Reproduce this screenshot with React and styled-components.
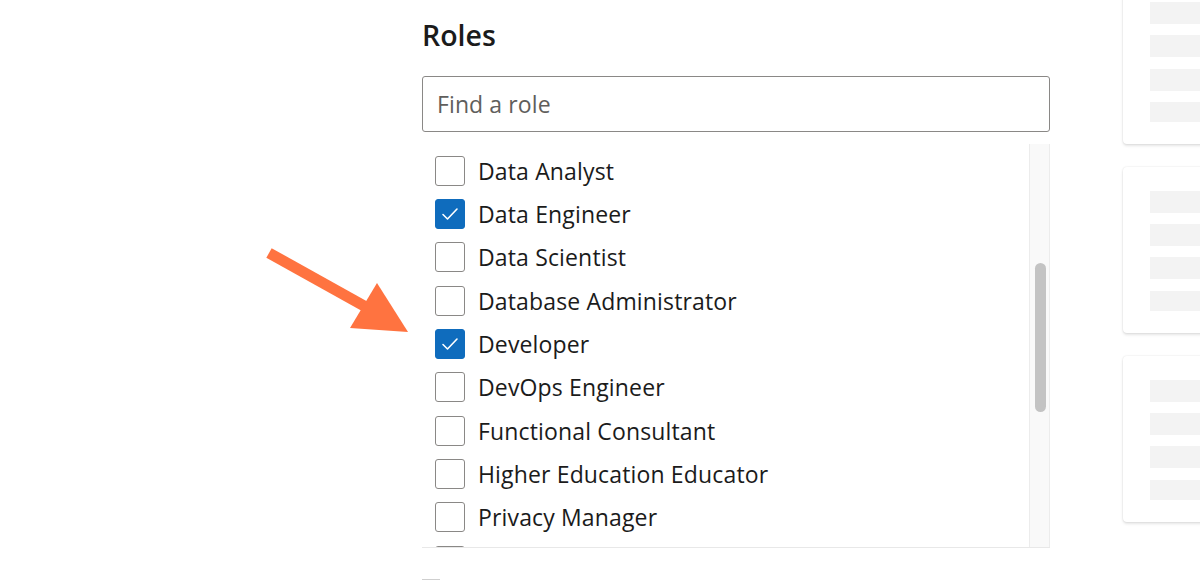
import React from 'react'
import styled, { createGlobalStyle } from 'styled-components'

const Global = createGlobalStyle`
  html, body {
    margin: 0;
    padding: 0;
    background: #fff;
    overflow: hidden;
  }
  body {
    font-family: "Open Sans", "Noto Sans", sans-serif;
    color: #1b1b1b;
  }
`

const Page = styled.div`
  position: relative;
  display: flex;
  align-items: flex-start;
  gap: 73px;
  padding-left: 422px;
  width: 1200px;
  height: 580px;
  box-sizing: border-box;
  overflow: hidden;
`

const Main = styled.section`
  width: 628px;
  flex: none;
`

const Title = styled.h2`
  margin: 0;
  padding-top: 16px;
  height: 76px;
  box-sizing: border-box;
  font-size: 28.5px;
  font-weight: 600;
  line-height: 38px;
  color: #1b1b1b;
`

const Search = styled.input`
  display: block;
  width: 100%;
  height: 56px;
  box-sizing: border-box;
  margin: 0;
  padding: 0 14px;
  border: 1px solid #8a8886;
  border-radius: 3px;
  font-family: inherit;
  font-size: 23px;
  letter-spacing: 0.1px;
  color: #1b1b1b;
  outline: none;

  &::placeholder {
    color: #605e5c;
  }
`

const ListBox = styled.div`
  display: flex;
  margin-top: 11px;
  height: 404px;
  border-bottom: 1px solid #e8e8e8;
`

const Items = styled.ul`
  flex: 1;
  margin: 0;
  padding: 6px 0 0 13px;
  list-style: none;
  overflow: hidden;
`

const Row = styled.li`
  display: flex;
  align-items: center;
  gap: 13px;
  height: 43.35px;
  font-size: 23px;
  letter-spacing: 0.15px;
  color: #1b1b1b;
  white-space: nowrap;
`

const Box = styled.span`
  flex: none;
  display: flex;
  align-items: center;
  justify-content: center;
  width: 30px;
  height: 30px;
  box-sizing: border-box;
  border-radius: 3px;
  border: 1px solid ${p => (p.checked ? '#0f6cbd' : '#8a8886')};
  background: ${p => (p.checked ? '#0f6cbd' : '#fff')};
`

const Track = styled.div`
  flex: none;
  width: 21px;
  margin-top: 1px;
  box-sizing: border-box;
  background: #f9f9f9;
  border-left: 1px solid #ececec;
  border-right: 1px solid #ececec;
`

const Thumb = styled.div`
  width: 11px;
  height: 149px;
  margin: 119px 0 0 5px;
  border-radius: 6px;
  background: #c3c3c3;
`

const NextBox = styled.div`
  width: 18px;
  height: 18px;
  margin-top: 31px;
  border-top: 1px solid #cfcfcf;
`

const Side = styled.aside`
  display: flex;
  flex-direction: column;
  gap: 23px;
  margin-top: -22px;
  flex: none;
  width: 200px;
`

const Card = styled.div`
  display: flex;
  flex-direction: column;
  gap: 11.3px;
  padding: 24px 0 22px 27px;
  border-radius: 4px;
  background: #fff;
  box-shadow: 0 0 2px rgba(0, 0, 0, 0.12), 0 2px 3px rgba(0, 0, 0, 0.1);
`

const Bar = styled.div`
  height: ${p => p.h || 22}px;
  background: #f3f3f3;
`

const Arrow = styled.svg`
  position: absolute;
  left: 260px;
  top: 240px;
`

const roles = [
  ['Data Analyst', false],
  ['Data Engineer', true],
  ['Data Scientist', false],
  ['Database Administrator', false],
  ['Developer', true],
  ['DevOps Engineer', false],
  ['Functional Consultant', false],
  ['Higher Education Educator', false],
  ['Privacy Manager', false],
  ['', false],
]

const Check = () => (
  <svg width="18" height="14" viewBox="0 0 18 14">
    <path d="M2 7.5 L6.5 12 L16 2" fill="none" stroke="#fff" strokeWidth="1.6" strokeLinecap="round" strokeLinejoin="round" />
  </svg>
)

const SkeletonCard = () => (
  <Card>
    <Bar />
    <Bar />
    <Bar />
    <Bar h={20} />
  </Card>
)

export default function App() {
  return (
    <>
      <Global />
      <Page>
        <Main>
          <Title>Roles</Title>
          <Search placeholder="Find a role" />
          <ListBox>
            <Items>
              {roles.map(([name, checked], i) => (
                <Row key={i}>
                  <Box checked={checked}>{checked && <Check />}</Box>
                  {name}
                </Row>
              ))}
            </Items>
            <Track>
              <Thumb />
            </Track>
          </ListBox>
          <NextBox />
        </Main>
        <Side>
          <SkeletonCard />
          <SkeletonCard />
          <SkeletonCard />
        </Side>
        <Arrow width="160" height="100" viewBox="0 0 160 100">
          <line x1="9" y1="13" x2="106" y2="67" stroke="#ff7340" strokeWidth="11" />
          <polygon points="117,43 90,88 148,92" fill="#ff7340" />
        </Arrow>
      </Page>
    </>
  )
}
